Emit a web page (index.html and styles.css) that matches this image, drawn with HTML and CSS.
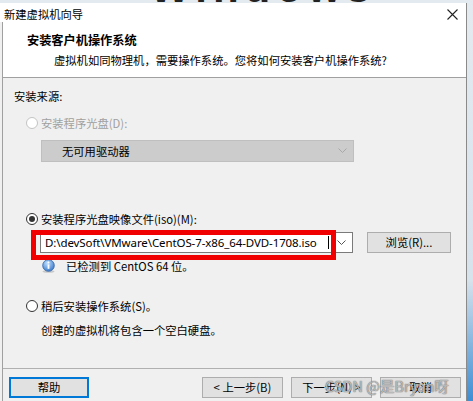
FILE: index.html
```html
<!DOCTYPE html>
<html lang="zh-CN">
<head>
<meta charset="utf-8">
<link rel="stylesheet" href="styles.css">
</head>
<body>
<div class="bgstrip"><div class="bgtext">Windows</div></div>
<div class="window">
  <div class="titlebar">
    <span class="title">新建虚拟机向导</span>
    <svg class="close" width="11" height="11" viewBox="0 0 11 11"><path d="M0.5 0.5L10.5 10.5M10.5 0.5L0.5 10.5" stroke="#222" stroke-width="1.1" fill="none"/></svg>
  </div>
  <div class="client">
    <div class="header">
      <div class="h1">安装客户机操作系统</div>
      <div class="h2">虚拟机如同物理机，需要操作系统。您将如何安装客户机操作系统?</div>
    </div>
    <div class="body">
      <div class="label">安装来源:</div>
      <div class="radio-row disabled r1">
        <span class="radio"></span><span>安装程序光盘(D):</span>
      </div>
      <div class="combo-disabled">
        <span>无可用驱动器</span>
        <svg width="9" height="6" viewBox="0 0 9 6"><path d="M0.5 0.5L4.5 4.5L8.5 0.5" stroke="#a8a8a8" fill="none"/></svg>
      </div>
      <div class="radio-row r2">
        <span class="radio checked"></span><span>安装程序光盘映像文件(iso)(M):</span>
      </div>
      <div class="iso-row">
        <div class="combo">
          <div class="field"><span>D:\devSoft\VMware\CentOS-7-x86_64-DVD-1708.iso</span><span class="caret"></span></div>
          <div class="drop"><svg width="9" height="6" viewBox="0 0 9 6"><path d="M0.5 0.5L4.5 4.5L8.5 0.5" stroke="#555" fill="none"/></svg></div>
          <div class="redbox"></div>
        </div>
        <div class="btn browse">浏览(R)...</div>
      </div>
      <div class="info-row">
        <svg class="info" width="15" height="14" viewBox="0 0 15 14">
          <defs><radialGradient id="g" cx="0.4" cy="0.3" r="0.8"><stop offset="0" stop-color="#bfe0ff"/><stop offset="1" stop-color="#2f6fc4"/></radialGradient></defs>
          <ellipse cx="7.5" cy="12.5" rx="6" ry="1.3" fill="#c8c8c8"/>
          <circle cx="7.5" cy="6.5" r="5.8" fill="url(#g)" stroke="#2a5fa8" stroke-width="0.8"/>
          <circle cx="7.5" cy="3.6" r="1" fill="#fff"/>
          <rect x="6.6" y="5.4" width="1.8" height="4.4" fill="#fff"/>
        </svg>
        <span>已检测到 CentOS 64 位。</span>
      </div>
      <div class="radio-row r3">
        <span class="radio"></span><span>稍后安装操作系统(S)。</span>
      </div>
      <div class="note">创建的虚拟机将包含一个空白硬盘。</div>
    </div>
    <div class="footer">
      <div class="btn default">帮助</div>
      <div class="spacer"></div>
      <div class="btn">&lt; 上一步(B)</div>
      <div class="btn">下一步(N) &gt;</div>
      <div class="btn last">取消</div>
      <div class="watermark">CSDN @是Bryan呀</div>
    </div>
  </div>
</div>
</body>
</html>
```
FILE: styles.css
```css
* { box-sizing: border-box; }
html, body { margin: 0; padding: 0; }
body {
  width: 473px;
  height: 401px;
  overflow: hidden;
  background: linear-gradient(180deg, #e4ebf0 0%, #d6e2ec 70%, #3d8ed4 100%);
  font-family: "Noto Sans CJK SC", "Microsoft YaHei", sans-serif;
  font-size: 11.3px;
  color: #000;
  position: relative;
}
.bgstrip {
  height: 3px;
  overflow: hidden;
  position: relative;
}
.bgtext {
  position: absolute;
  left: 150px;
  top: -36px;
  font: bold 42px "Liberation Sans", sans-serif;
  color: #222;
  letter-spacing: 6px;
}
.window {
  position: relative;
  width: 467px;
  height: 398px;
  background: #f0f0f0;
  border-right: 1px solid #8a8a8a;
  display: flex;
  flex-direction: column;
}
.titlebar {
  height: 19px;
  background: #fff;
  display: flex;
  align-items: center;
  padding-left: 4px;
  padding-right: 8px;
  line-height: 1;
}
.title { flex: 1; font-size: 11.3px; padding-top: 4px; }
.close { margin-top: 4px; }
.client {
  flex: 1;
  margin-left: 2px;
  border-left: 1px solid #a0a0a0;
  display: flex;
  flex-direction: column;
}
.header {
  height: 56px;
  background: #fff;
  border-bottom: 1px solid #a0a0a0;
  padding-top: 10px;
}
.h1 {
  font-weight: bold;
  font-size: 12.2px;
  line-height: 16px;
  padding-left: 24px;
}
.h2 {
  padding-left: 51px;
  margin-top: 4px;
  line-height: 16px;
}
.body {
  flex: 1;
  padding: 10px 0 0 0;
  line-height: 16px;
}
.label { padding-left: 11px; }
.radio-row {
  display: flex;
  align-items: center;
  gap: 3px;
  padding-left: 23px;
}
.radio-row.disabled { color: #a0a0a0; }
.r1 { margin-top: 11px; }
.r2 { margin-top: 49px; }
.r3 { margin-top: 24px; }
.radio {
  width: 12px;
  height: 12px;
  border-radius: 50%;
  border: 1px solid #333;
  background: #fff;
  position: relative;
  flex: none;
}
.disabled .radio { border-color: #c4c4c4; }
.radio.checked::after {
  content: "";
  position: absolute;
  left: 2px; top: 2px;
  width: 6px; height: 6px;
  border-radius: 50%;
  background: #333;
}
.combo-disabled {
  margin: 9px 0 0 38px;
  width: 313px;
  height: 22px;
  background: #cccccc;
  border: 1px solid #bfbfbf;
  display: flex;
  align-items: center;
  justify-content: space-between;
  padding: 0 6px 0 20px;
}
.iso-row {
  display: flex;
  align-items: center;
  margin: 5px 0 0 37px;
  gap: 14px;
}
.combo {
  position: relative;
  width: 313px;
  height: 21px;
  display: flex;
  background: #fff;
  border: 1px solid #7a7a7a;
}
.field {
  flex: 1;
  display: flex;
  align-items: center;
  padding-left: 4px;
  font-family: "Noto Sans", "DejaVu Sans", sans-serif;
  font-size: 11.5px;
  letter-spacing: -0.1px;
  white-space: nowrap;
}
.caret {
  width: 1px;
  height: 13px;
  background: #000;
  margin-left: auto;
  margin-right: 1px;
}
.drop {
  width: 22px;
  display: flex;
  align-items: center;
  justify-content: center;
}
.redbox {
  position: absolute;
  left: -10px;
  top: -3px;
  width: 305px;
  height: 30px;
  border: 5px solid #f00000;
}
.btn {
  height: 21px;
  width: 84px;
  background: #e1e1e1;
  border: 1px solid #adadad;
  display: flex;
  align-items: center;
  justify-content: center;
  line-height: 1;
}
.browse { width: 84px; }
.info-row {
  display: flex;
  align-items: center;
  gap: 10px;
  padding-left: 38px;
  margin-top: 5px;
}
.info-row span { font-size: 11.3px; }
.note { padding-left: 38px; margin-top: 8px; }
.footer {
  height: 33px;
  border-top: 1px solid #b0b0b0;
  display: flex;
  align-items: flex-start;
  padding: 8px 0 0 6px;
  gap: 8px;
  position: relative;
}
.footer .btn { width: 81px; height: 21px; }
.footer .btn.default { border: 2px solid #0078d7; width: 80px; }
.spacer { flex: 1; }
.footer .btn.last { margin-right: 5px; }
.watermark {
  position: absolute;
  left: 322px;
  top: 7px;
  font-size: 14.5px;
  line-height: 20px;
  color: rgba(255,255,255,0.55);
  text-shadow: 0 0 1px #666, 0 0 1px #666;
  white-space: nowrap;
}
```
